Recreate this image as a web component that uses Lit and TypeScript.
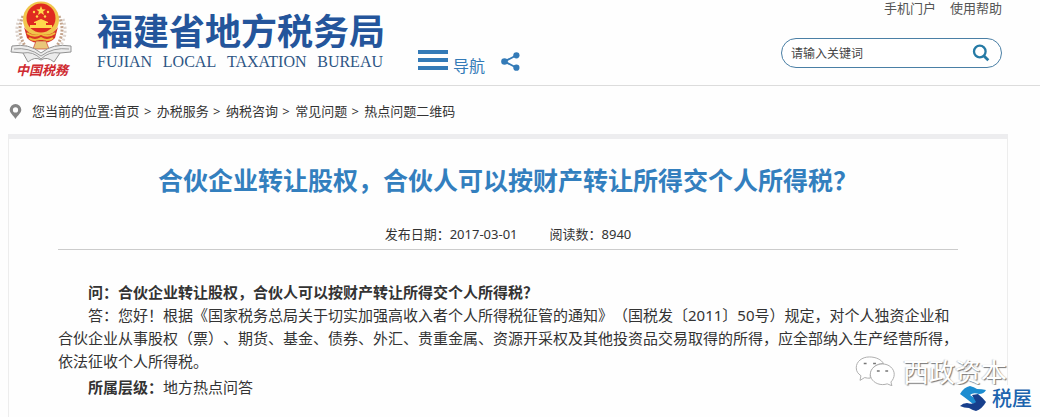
import { LitElement, html, css } from "lit";
import { customElement } from "lit/decorators.js";

const CRUMBS = ["首页", "办税服务", "纳税咨询", "常见问题", "热点问题二维码"];

@customElement("app-root")
export class AppRoot extends LitElement {
  static styles = css`
    :host {
      display: block;
      position: relative;
      min-height: 100vh;
      overflow: hidden;
      background: #fefefe;
      color: #333;
      font-family: "Noto Sans", "Noto Sans CJK SC", sans-serif;
      font-size: 13px;
      line-height: 20px;
      text-spacing-trim: space-all;
    }
    * { box-sizing: border-box; }
    a { color: inherit; text-decoration: none; }
    header {
      display: flex;
      height: 86px;
      padding: 0 38px 0 9px;
      border-bottom: 1px solid #dcdcdc;
    }
    .emblem { display: block; width: 64px; height: 84px; flex: none; }
    .emblem text { font: italic 700 13px "Noto Sans CJK TC", sans-serif; fill: #cf2a30; }
    .brand { display: block; margin: 11px 0 0 24px; width: 286px; color: #24559b; }
    .brand-name {
      display: block;
      font: 700 36px/36px "Noto Sans CJK SC", sans-serif;
      white-space: nowrap;
    }
    .brand-en {
      display: flex;
      justify-content: space-between;
      margin-top: 6px;
      font: 16px/18px "Liberation Serif", serif;
      color: #2d5584;
    }
    .nav { display: flex; align-items: flex-end; height: 77px; margin-left: 35px; color: #337ab7; }
    .menu {
      display: flex;
      align-items: flex-end;
      gap: 5px;
      padding: 0;
      border: 0;
      background: none;
      color: inherit;
      font: 16px/24px "Noto Sans CJK SC", sans-serif;
    }
    .bars { display: block; margin-bottom: 7px; }
    .share { display: block; padding: 0; margin: 0 0 6px 16px; border: 0; background: none; color: inherit; }
    .share svg { display: block; }
    .tools { margin-left: auto; display: flex; flex-direction: column; align-items: flex-end; }
    .links { display: flex; gap: 14px; height: 38px; line-height: 16px; color: #555; }
    .search {
      display: flex;
      align-items: center;
      width: 221px;
      height: 30px;
      padding: 0 11px 0 9px;
      border: 1px solid #4a7fa5;
      border-radius: 15px;
      background: #fff;
    }
    .search input {
      flex: 1;
      min-width: 0;
      padding: 0;
      border: 0;
      outline: 0;
      background: none;
      font: 12px/20px "Noto Sans CJK SC", sans-serif;
      color: #444;
    }
    .search input::placeholder { color: #444; opacity: 1; }
    .search button { padding: 0; border: 0; background: none; }
    .search svg { display: block; }
    .crumbs { display: flex; align-items: center; gap: 10px; height: 48px; padding: 2px 9px 0; }
    .crumbs svg { flex: none; }
    .sep { margin: 0 2px 0 1px; }
    .card {
      margin: 0 32px 0 8px;
      padding: 0 49px 8px;
      min-height: 283px;
      border: 1px solid #ededed;
      border-top: 5px solid #ededef;
      border-bottom: 0;
      background: #fefefe;
    }
    h1 {
      margin: 0;
      padding: 22px 0 29px;
      font: 700 25px/36px "Noto Sans CJK SC", sans-serif;
      color: #337fbe;
      text-align: center;
      white-space: nowrap;
    }
    .meta {
      display: flex;
      justify-content: center;
      gap: 32px;
      height: 24px;
      margin: 0;
      border-bottom: 1px solid #ccc;
      line-height: 16px;
    }
    .body { padding-top: 31px; font-size: 15px; line-height: 23px; }
    .body p { margin: 0; text-indent: 2em; }
    .body .level { margin-top: 3px; }
    .mark { position: absolute; right: 33px; bottom: 31px; display: flex; align-items: center; gap: 7px; }
    .mark span {
      font: 26px/28px "Noto Sans CJK SC", sans-serif;
      color: #fff;
      text-shadow: 1px 1px 1px #777, -1px 0 1px #ccc;
    }
    .site {
      position: absolute;
      right: 0;
      bottom: 0;
      display: flex;
      align-items: center;
      gap: 5px;
      padding: 0 8px 6px 4px;
      background: #fefefe;
      font: 500 20px/26px "Noto Sans CJK SC", sans-serif;
      color: #1d64ae;
    }
  `;

  private emblem() {
    return html`<svg class="emblem" viewBox="0 0 64 84" role="img" aria-label="中国税務">
      <g fill="none" stroke="#c2a38c" stroke-width="3" stroke-dasharray="2 1.5">
        <path d="M14 16Q6 34 19 50" /><path d="M50 16Q58 34 45 50" />
      </g>
      <g fill="none" stroke="#ddd3cc" stroke-width="3" stroke-dasharray="2 2">
        <path d="M10 19Q4 36 15 49" /><path d="M54 19Q60 36 49 49" />
      </g>
      <circle cx="32" cy="19.500" r="18" fill="#f1c54c" />
      <circle cx="32" cy="18" r="14.5" fill="#df2a20" />
      <path d="M32 6l1.300 3.200 3.400.2-2.600 2.200.8 3.300-2.900-1.800-2.900 1.800.8-3.300-2.600-2.200 3.400-.2z" fill="#ffd94d" />
      <g fill="#ffd94d">
        <circle cx="25" cy="12" r="1.200" /><circle cx="28" cy="16.500" r="1.200" />
        <circle cx="36" cy="16.500" r="1.200" /><circle cx="39" cy="12" r="1.200" />
        <path d="M25 22l7-3 7 3v1H25zM27 23h10v2H27zM21 25h22v3H21z" />
      </g>
      <path d="M15 27Q21 37 32 34Q43 37 49 27L46 38Q39 45 32 41Q25 45 18 38z" fill="#d93425" />
      <path d="M18 33Q25 38 32 34Q39 38 46 33M20 38Q26 42 32 38Q38 42 44 38" fill="none" stroke="#f1bb3c" stroke-width="2" />
      <path d="M27 41h10l3 8H24z" fill="#e9c67a" stroke="#c84032" stroke-width=".7" />
      <path d="M3 46Q20 43 32 53Q44 43 62 46L62 52L51 53L45 62Q38 56 32 60Q26 56 19 62L14 53L2 52z" fill="#ececec" stroke="#929292" />
      <path d="M5 49Q20 47 32 56Q44 47 60 49M14 53Q24 51 32 59Q40 51 51 53" fill="none" stroke="#9a9a9a" />
      <text x="7" y="75">中国税務</text>
    </svg>`;
  }

  render() {
    return html`
      <header>
        ${this.emblem()}
        <a class="brand" href="#">
          <span class="brand-name">福建省地方税务局</span>
          <span class="brand-en"><span>FUJIAN</span> <span>LOCAL</span> <span>TAXATION</span> <span>BUREAU</span></span>
        </a>
        <div class="nav">
          <button class="menu" type="button">
            <svg class="bars" width="30" height="20" viewBox="0 0 30 20" fill="currentColor">
              <path d="M0 0h30v4H0zM0 8h30v4H0zM0 16h30v4H0z" />
            </svg>导航
          </button>
          <button class="share" type="button" aria-label="分享">
            <svg width="19" height="19" viewBox="0 0 19 19" fill="currentColor">
              <path d="M15.5 3.2L3.5 9.5l12 6.3" fill="none" stroke="currentColor" stroke-width="1.8" />
              <circle cx="3.5" cy="9.5" r="3.3" /><circle cx="15.4" cy="3.3" r="3.1" /><circle cx="15.4" cy="15.7" r="3.1" />
            </svg>
          </button>
        </div>
        <div class="tools">
          <nav class="links"><a href="#">手机门户</a><a href="#">使用帮助</a></nav>
          <form class="search" role="search">
            <input type="text" aria-label="请输入关键词" placeholder="请输入关键词" />
            <button type="button" aria-label="搜索">
              <svg width="18" height="18" viewBox="0 0 18 18" fill="none" stroke="#257aa5">
                <circle cx="7.8" cy="7.5" r="5.8" stroke-width="2.3" /><path d="M12 12l4.3 4.3" stroke-width="2.8" />
              </svg>
            </button>
          </form>
        </div>
      </header>
      <nav class="crumbs" aria-label="位置">
        <svg width="13" height="15" viewBox="0 0 13 15"><path fill="#858585" fill-rule="evenodd" d="M6.5 0A5.8 5.8 0 0 1 12.3 5.8C12.3 9 9 11 6.5 15C4 11 .7 9 .7 5.8A5.8 5.8 0 0 1 6.5 0zM6.5 3.3a2.6 2.6 0 1 0 0 5.2a2.6 2.6 0 0 0 0-5.2z" /></svg>
        <span>您当前的位置:${CRUMBS.map((c, i) => html`${i ? html`<span class="sep"> &gt; </span>` : ""}<a href="#">${c}</a>`)}</span>
      </nav>
      <article class="card">
        <h1>合伙企业转让股权，合伙人可以按财产转让所得交个人所得税？</h1>
        <p class="meta"><span>发布日期：2017-03-01</span><span>阅读数：8940</span></p>
        <div class="body">
          <p><b>问：合伙企业转让股权，合伙人可以按财产转让所得交个人所得税？</b></p>
          <p>答：您好！根据《国家税务总局关于切实加强高收入者个人所得税征管的通知》（国税发〔2011〕50号）规定，对个人独资企业和合伙企业从事股权（票）、期货、基金、债券、外汇、贵重金属、资源开采权及其他投资品交易取得的所得，应全部纳入生产经营所得，依法征收个人所得税。</p>
          <p class="level"><b>所属层级：</b>地方热点问答</p>
        </div>
      </article>
      <div class="mark">
        <svg width="42" height="30" viewBox="0 0 42 32" fill="#fff" stroke="#aaa">
          <path d="M15 1C7 1 1 6 1 12.5c0 4 2 6.500 5 8.500L5 26l5-3c2 .6 4 .8 6 .6C15 14 21 8 30 8C28 4 22 1 15 1z" />
          <path d="M29 8.500c-7 0-13 5-13 11s6 11 13 11c2 0 3.500-.3 5-.8l5 2-1-4c2-2 3.500-5 3.500-8.200c0-6-5.500-11-12.500-11z" />
          <path d="M9 8h3M19 8h3M23 16h3M32 16h3" stroke="#777" stroke-width="1.5" />
        </svg>
        <span>西政资本</span>
      </div>
      <div class="site">
        <svg width="28" height="25" viewBox="0 0 28 25">
          <path fill="#1c8cd0" d="M1 8Q5 1 11 0Q15 1 18 3Q23 3 27 4Q25 8 20 8Q14 6 11 9Q15 12 21 15L14 18Q8 13 1 8z" />
          <path fill="#173f8c" d="M13 9L19 8Q24 12 27 16Q23 23 17 25Q13 24 10 22Q5 22 1 20Q4 17 8 17Q14 19 17 16Z" />
        </svg>
        <span>税屋</span>
      </div>
    `;
  }
}
